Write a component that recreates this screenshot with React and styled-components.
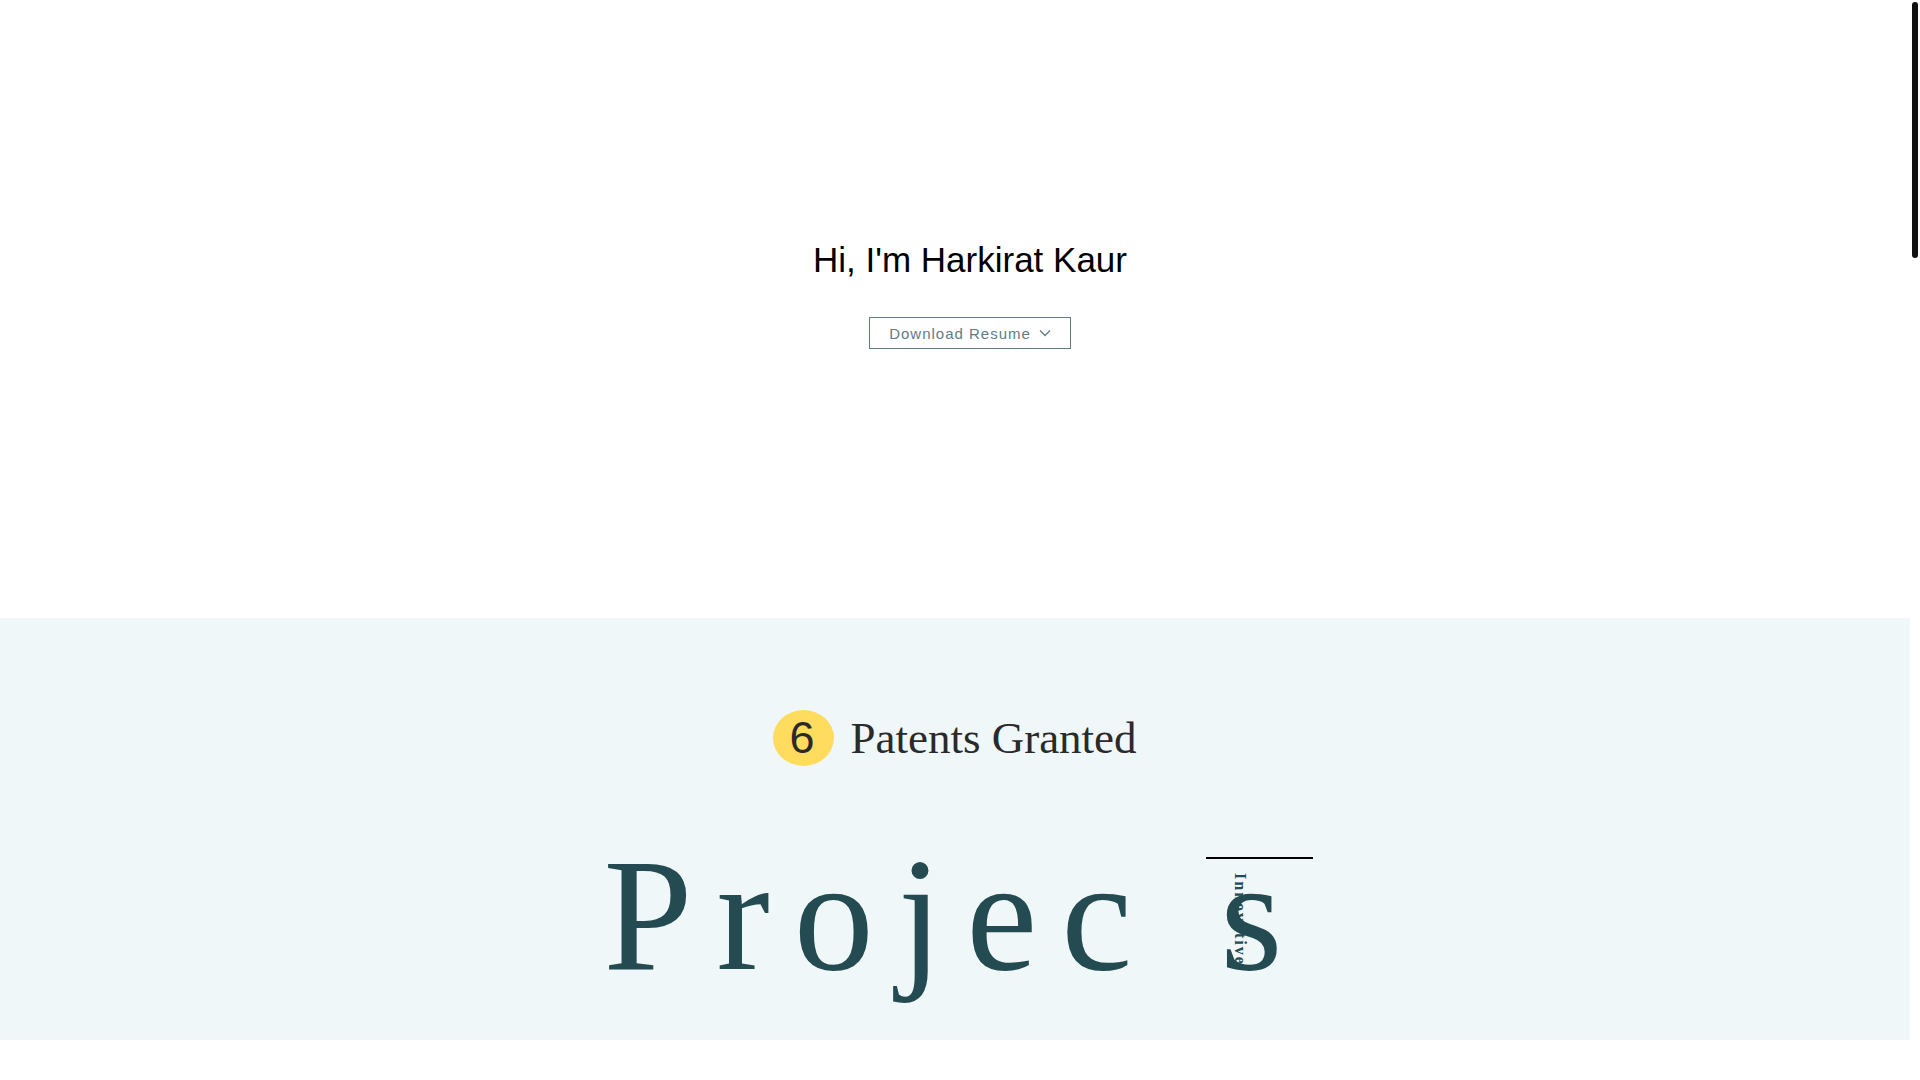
import React from "react";
import styled, { createGlobalStyle } from "styled-components";

const GlobalStyle = createGlobalStyle`
  * {
    box-sizing: border-box;
  }
  body {
    margin: 0;
    background: #fff;
    font-family: "Liberation Sans", Arial, sans-serif;
  }
  h1, h2, p {
    margin: 0;
    font-weight: 400;
  }
`;

const Page = styled.div`
  display: flex;
  height: 100vh;
  overflow: hidden;
`;

const Content = styled.main`
  flex: 1;
  min-width: 0;
`;

const ScrollRail = styled.div`
  flex: none;
  width: 10px;
  padding: 2px;
`;

const ScrollThumb = styled.div`
  height: 256px;
  border-radius: 3px;
  background: #111;
`;

const Hero = styled.section`
  display: flex;
  flex-direction: column;
  align-items: center;
  gap: 38px;
  padding: 240px 0 269px 30px;
`;

const Greeting = styled.h1`
  font-size: 35px;
  line-height: 39px;
  color: #000;
`;

const ResumeButton = styled.button`
  display: flex;
  align-items: center;
  gap: 8px;
  height: 32px;
  padding: 0 19px;
  border: 1px solid #607d86;
  background: #fff;
  color: #607d86;
  font-family: inherit;
  font-size: 15px;
  letter-spacing: 1px;
  cursor: pointer;
`;

const Work = styled.section`
  display: flex;
  flex-direction: column;
  align-items: center;
  gap: 60px;
  padding: 92px 0 36px;
  background: #eff7f9;
`;

const Patents = styled.p`
  display: flex;
  align-items: center;
  gap: 16px;
  color: #2a2a2a;
  font-family: "Liberation Serif", "Times New Roman", serif;
  font-size: 45px;
  line-height: 56px;
`;

const Count = styled.span`
  padding: 0 20px 0 16px;
  border-radius: 50%;
  background: #ffdc5e;
  font-family: "Liberation Sans", Arial, sans-serif;
`;

const Projects = styled.h2`
  display: flex;
  color: #244a52;
  font-family: "Liberation Serif", "Times New Roman", serif;
  font-size: 160px;
  line-height: 178px;
  letter-spacing: 24px;
`;

const LetterT = styled.span`
  position: relative;
  width: 64px;
`;

// the crossbar and stem of the "t" hang over the neighbouring letter
const Crossbar = styled.span`
  position: absolute;
  top: 31px;
  left: 50px;
  width: 107px;
  height: 2px;
  background: #000;
`;

const Stem = styled.span`
  position: absolute;
  top: 47px;
  left: 75px;
  writing-mode: vertical-rl;
  font-size: 16px;
  font-weight: 700;
  line-height: 18px;
  letter-spacing: 2px;
`;

const ChevronDown = () => (
  <svg width="12" height="12" viewBox="0 0 12 12" fill="none" aria-hidden="true">
    <path d="M1 3.500 6 8.500l5-5" stroke="currentColor" strokeWidth="1.300" />
  </svg>
);

const App = () => (
  <>
    <GlobalStyle />
    <Page>
      <Content>
        <Hero>
          <Greeting>Hi, I'm Harkirat Kaur</Greeting>
          <ResumeButton type="button">
            Download Resume
            <ChevronDown />
          </ResumeButton>
        </Hero>
        <Work>
          <Patents>
            <Count>6</Count>
            Patents Granted
          </Patents>
          <Projects>
            <span>Projec</span>
            <LetterT>
              <Crossbar />
              <Stem>Innovative</Stem>
            </LetterT>
            <span>s</span>
          </Projects>
        </Work>
      </Content>
      <ScrollRail>
        <ScrollThumb />
      </ScrollRail>
    </Page>
  </>
);

export default App;
